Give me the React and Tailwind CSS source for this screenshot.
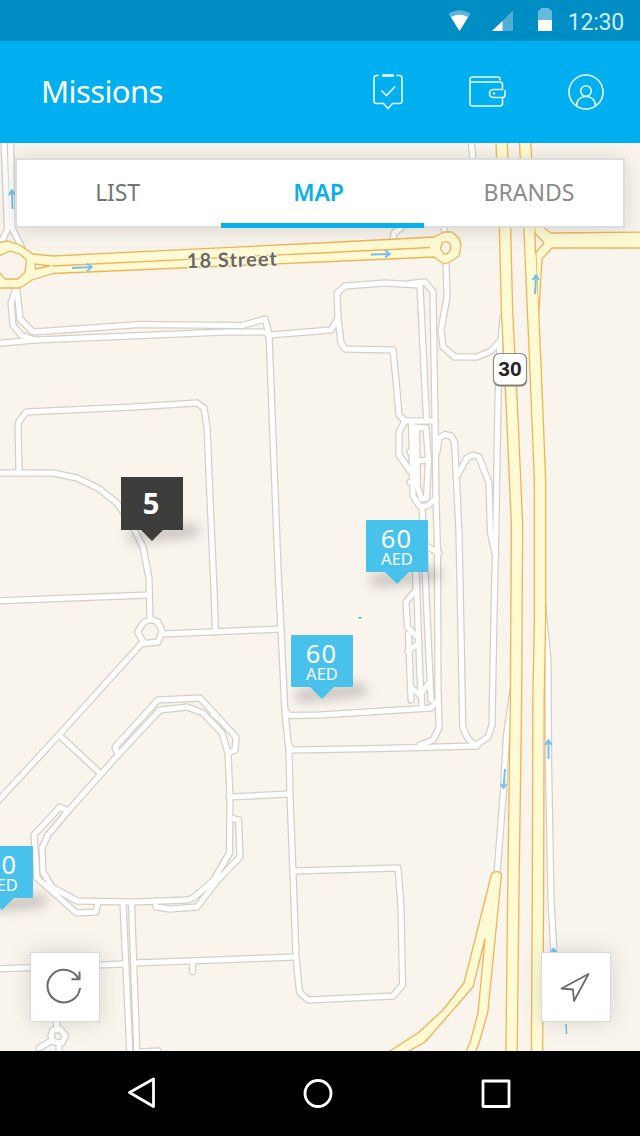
const TABS = [
  { label: 'LIST', className: 'w-[204px] pr-[3px] tracking-[-0.2px] text-[#747474]' },
  {
    label: 'MAP',
    className:
      'relative w-[203px] pr-[8px] font-semibold tracking-[-0.1px] text-[#09aeea] after:absolute after:inset-x-0 after:-bottom-[2px] after:h-[5px] after:bg-[#09aeea]',
  },
  { label: 'BRANDS', className: 'flex-1 pl-[11px] tracking-[0px] text-[#8a8a8a]' },
]

const PINS = [
  { id: 'a', left: 'left-[366px]', top: 'top-[377px]' },
  { id: 'b', left: 'left-[291px]', top: 'top-[492px]' },
  { id: 'c', left: 'left-[-29px]', top: 'top-[703px]' },
]

// Local streets, drawn as a grey casing with a white line on top
const STREETS = [
  'M4 140 L7.500 229 L1 243',
  'M10.500 140 L12 228 L22 248',
  'M471 140 L473.500 165',
  'M393 241 L394 233 L402 227',
  'M445 235 L443 220',
  'M16 288 L11 303 L13 325 L21 335 L35 340',
  'M17 290 L20 319 L33 332 L140 324.500 L242 325.500 L265 319 L269 334',
  'M-4 343.500 L35 340 L225 332 L264 332 L270 335 L331 330 L338 318 L337 293 L345 286 L385 283 L419 285',
  'M338 318 L341 343 L345 349 L393 350 L396 380 L399 415 L405 421 L435 421',
  'M410 283.500 L425 282 L433 292 L434.700 400 L436 500 L437.500 550 L438 687 L439 728 L433 740 L420 745',
  'M420 286 L426.500 420',
  'M446 262 L447 297 L441 330 L443 347 L455 357 L477 357 L491 351 L501 340 L503 318',
  'M500 345 L498 400 L496.700 480 L495.500 550 L494 613 L492 725 L488 737 L476 745',
  'M437 452 L439 438 L445 434.500 L451 436 L454.500 442 L456 470 L459 533 L461 633 L462.700 727 L467 737 L475 746',
  'M457 476 L467 458 L473 455 L479 457 L489 483 L490.500 533 L495.500 555',
  'M404 423 L399 432 L399 455 L411 472',
  'M411.500 423 L413 496 L420 506.500 L427 506 L436.500 498',
  'M412 427 L426 428 L428.500 460 L426.500 498 L421.500 499 L417.500 487 L416.500 427',
  'M418 461 L428 460',
  'M410 452 L416 452',
  'M410 482 L416 482',
  'M422 508 L425 560',
  'M428 547 L439 553',
  'M415 560 L416 590 L406 602 L407.500 627 L418 638',
  'M408.500 634 L411 700',
  'M408 651 L419 643',
  'M416 570 L420 677 L422 707',
  'M424.500 560 L431 700',
  'M412 688 L420 695 L429 683',
  'M286 712 L290 715.500 L320 715 L431 708 L437 701',
  'M288 743 L292 750 L380 748.500 L477 746',
  'M269 334 L278.500 580 L281 630 L285 713 L289 750 L290 795 L293 873 L296 957 L299.500 992 L308 1000 L393 996 L402.500 985 L401 907 L398 868 L293 871',
  'M-4 473 L53 473 L77 478 L98 488 L117 503 L133 527 L143 547 L149 578 L150 620',
  'M19 473 L18 423 L26 412 L133 407 L197 403 L204 408 L207 427 L214 590 L215.500 632',
  'M-4 601 L148 595',
  'M163 634 L281 629',
  'M142 643 L59 735 L-4 803',
  'M144 622 L151 619.500 L158 622 L162 631 L158 642 L144 643.500 L137.500 632 Z',
  'M59 735 L101 774',
  'M118 755 L160 710 L187 707 L203 713 L222 733 L228 753 L230 797 L229.500 853 L213 881 L193 898 L187 900 L133 902 L77 901 L52 887 L43 872 L42 848 L48 835 L68 811 Z',
  'M118 755 L115 747 L158 700 L200 698 L236 737 L235 750 L229 753',
  'M213 714 L218 718',
  'M230 818 L238.500 820 L240 857 L217 881 L197 907 L170 909 L156 907 L155 901',
  'M98 903 L96 912 L76.500 913 L37 878 L34 835 L60 807 L68 811',
  'M229 797 L289 794',
  'M123 903 L130 1056',
  'M131.500 903 L137 1056',
  'M-4 969 L125 964',
  'M134 963 L295 957',
  'M192.500 962 L192.500 971.500',
  'M140 1052 L158 1051',
  'M56 1015 L57 1030',
  'M51 1041 L39 1048',
  'M59 1043 L59 1056',
  'M53 1030 L60 1029 L65.500 1036 L62 1043 L54 1042 L51 1036 Z',
  'M541 590 L548 660 L548.500 760 L551 900 L554 955',
  'M513 690 L506.500 735 L503.500 790 L496.500 880',
]

const HIGHWAYS = [
  'M501.500 140 L505 228 L507 310 L512 410 L517 525 L516 700 L513.500 880 L511.500 1056',
  'M525 140 L529.500 228 L533 310 L537 405 L540 480 L540 620 L538.500 700 L538 890 L537 1056',
]

const ARROWS = [
  'M12.500 209 L12 190 M9 195 L12 190 L15 195',
  'M72 268 L92 267 M87 263.500 L92 267 L87 271',
  'M371 254.500 L390 254 M385 250.500 L390 254 L385 257.500',
  'M535 294 L536 275 M532.500 280 L536 275 L539 280',
  'M505 769 L503.500 788 M501 784 L503.500 788 L506.500 784',
  'M548.500 759 L548.500 740 M545.500 745 L548.500 740 L551.500 745',
]

function StatusBar() {
  return (
    <div className="flex h-[41px] shrink-0 items-center justify-end bg-[#008dc4] pr-4">
      <svg className="mr-[13px] h-[30px] w-[110px]" viewBox="445 5 110 30">
        <path d="M447.500 13 Q458.500 5.500 469.500 13 L458.500 30 Z" fill="#5db5db" />
        <path d="M450 16 Q458.500 11.500 467 16 L458.500 30 Z" fill="#fff" />
        <path d="M512 9.500 V30 H491 Z" fill="#50aed6" />
        <path d="M501.500 20 V30 H491 Z" fill="#fff" />
        <path d="M537 10 Q537 9 539 9 L540 7 H548 L549 9 Q551 9 551 10 V20 H537 Z" fill="#66bbdf" />
        <path d="M537 19 H551 V30 H537 Z" fill="#fff" />
      </svg>
      <span className="mt-[3px] -ml-[1px] font-['Roboto',sans-serif] text-[23px] leading-none tracking-[-0.2px] text-[#c9edfb]">12:30</span>
    </div>
  )
}

function Header() {
  return (
    <header className="flex h-[102px] shrink-0 items-center justify-between bg-[#00aff0] pl-[41px] pr-[35px]">
      <h1 className="pb-[2px] text-[31px] leading-none tracking-[-0.6px] text-white">Missions</h1>
      <svg className="h-[40px] w-[234px]" viewBox="371 72 234 40" fill="none" stroke="#e8f9ff" strokeWidth="1.6">
        {/* Mission check */}
        <path d="M379 75.500 H376.500 Q374 75.500 374 78 V101 Q374 103.500 376.500 103.500 H383.500 L388 108.500 L392.500 103.500 H399.500 Q402 103.500 402 101 V78 Q402 75.500 399.500 75.500 H396.500" />
        <path d="M382 75.500 H394" strokeWidth="2.6" />
        <path d="M381.500 90.500 L386.500 95.500 L395 86.500" />
        {/* Wallet */}
        <path d="M500 80.500 V79 Q500 77 498 77 H472.500 Q470 77 470 79.500 V103.500 Q470 106 472.500 106 H500 Q502.500 106 502.500 103.500 V97.500" />
        <path d="M470 82 H500 Q502.500 82 502.500 84.500 V89.500 H494 Q489.500 89.500 489.500 93.500 Q489.500 97.500 494 97.500 H502.500 Q505 97.500 505 95 V90" />
        <circle cx="494" cy="93.500" r="1.200" fill="#e8f9ff" stroke="none" />
        {/* Profile */}
        <circle cx="586" cy="92" r="17" />
        <circle cx="586" cy="91" r="5.300" />
        <path d="M576.500 106 C576.500 100 580.500 96.500 586 96.500 C591.500 96.500 595.500 100 595.500 106" />
      </svg>
    </header>
  )
}

function StreetMap() {
  return (
    <svg className="absolute inset-0 h-full w-full" viewBox="0 143 640 908" fill="none" strokeLinejoin="round">
      <rect x="0" y="143" width="640" height="908" fill="#f9f4ec" />
      <g stroke="#d5cfc8" strokeWidth="7.500" strokeLinecap="round">
        {STREETS.map((d) => <path key={d} d={d} />)}
      </g>
      <g stroke="#fff" strokeWidth="5" strokeLinecap="round">
        {STREETS.map((d) => <path key={d} d={d} />)}
      </g>
      <path d="M554 950 L559 985 L566 1022" stroke="#d5cfc8" />

      {/* Main roads */}
      <g stroke="#f0b458" strokeWidth="1.300" fill="#fefbd4">
        <path d="M-5 243 L8 241 L20 245 L33 254 L53 256 L320 243 L434 237 L444 232 L452 232 L459 238 L461 245 L459 256 L450 262 L444 264 L434 257 L320 262 L53 273.500 L32 280 L20 288 L-5 288 Z" />
        <path d="M52 266 L320 253 L430 247.500" fill="none" />
        <path d="M-1 256 L10 251 L20 254 L26.500 260 L25 272 L18 279 L5 279 L-1 272 Z" fill="#f9f4ec" />
        <path d="M35 264 L50 266 L35.500 269 Z" fill="#f9f4ec" />
        <path d="M442 243 L446 241.500 L450 243.500 L451 249 L448 253 L444 254 L440.500 249 Z" fill="#f9f4ec" />
        <path d="M491.500 874 Q497 869 501.500 874 L496 930 L487.700 1013 L479 1043 L474 1056 H464 L470 1043 L478 1013 L485 939 L473 987 L453 1010 L425 1042 L400 1056 H382 L418 1033 L443 1010 L464 983 L481.700 913 Z" />
      </g>
      <g stroke="#f0b458" strokeWidth="12.600">
        {HIGHWAYS.map((d) => <path key={d} d={d} />)}
      </g>
      <path d="M535 218 L543 227 L551 233 L645 232 V248 H552 L542 259 L539 310" fill="#fefbd4" stroke="#f0b458" strokeWidth="1.300" />
      <g stroke="#fefbd4" strokeWidth="10">
        {HIGHWAYS.map((d) => <path key={d} d={d} />)}
      </g>
      <path d="M535 233 L544 243 L535.500 253 Z" fill="#f9f4ec" stroke="#f0b458" strokeWidth="1.300" />

      <g stroke="#74c0f1" strokeWidth="2">
        {ARROWS.map((d) => <path key={d} d={d} />)}
      </g>
      <path d="M550 952 L553.500 947 L557 952 Z" fill="#74c0f1" />
      <path d="M566 1024 L566.500 1034" stroke="#5fb2d8" strokeWidth="1.300" />
      <path d="M358 617 H362 L360 619 Z" fill="#33b1dc" />

      <text
        x="187"
        y="268"
        transform="rotate(-1.500 187 267)"
        textLength="90"
        className="font-['Lato',sans-serif] text-[20px] font-bold"
        fill="#6b6762"
        stroke="#fefbe4"
        strokeWidth="2"
        paintOrder="stroke"
      >
        18 Street
      </text>

      {/* Route shield */}
      <rect x="493.500" y="354.500" width="33.500" height="32" rx="6" fill="#77736c" />
      <rect x="493.500" y="353.500" width="33" height="31.500" rx="6" fill="#fff" stroke="#8f8a84" strokeWidth="1.200" />
      <text x="510" y="376" textAnchor="middle" className="font-['Liberation_Sans',sans-serif] text-[21px] font-bold" fill="#252525">30</text>
    </svg>
  )
}

function PricePin({ left, top }) {
  return (
    <div className={`absolute ${left} ${top} w-[62px]`}>
      <div className="absolute left-[4px] top-[51px] h-[13px] w-[72px] -rotate-6 rounded-full bg-black/20 blur-[6px]" />
      <div className="relative flex h-[52px] flex-col items-center rounded-[1px] bg-[#48c2ea] pt-[5px] text-white">
        <span className="-ml-[1px] text-[25.5px] leading-[26px] tracking-[1.2px]">60</span>
        <span className="text-[16.500px] leading-[16px]">AED</span>
      </div>
      <div className="relative mx-auto h-[12px] w-[24px] bg-[#48c2ea] [clip-path:polygon(0_0,100%_0,50%_100%)]" />
    </div>
  )
}

function ClusterPin() {
  return (
    <div className="absolute left-[121px] top-[334px] w-[62px]">
      <div className="absolute left-[6px] top-[50px] h-[13px] w-[72px] -rotate-6 rounded-full bg-black/20 blur-[6px]" />
      <div className="relative flex h-[53px] items-center justify-center bg-[#3d3d3b] pr-[2px] pb-[2px] font-['Open_Sans','Noto_Sans',sans-serif] text-[29px] font-bold leading-none text-white">5</div>
      <div className="relative mx-auto h-[11px] w-[22px] bg-[#3d3d3b] [clip-path:polygon(0_0,100%_0,50%_100%)]" />
    </div>
  )
}

function Tabs() {
  return (
    <nav className="relative mx-[15px] mt-[15px] flex h-[70px] border-2 border-[#dddddd] bg-white shadow-[0_2px_20px_rgba(90,100,90,0.2)]">
      {TABS.map(({ label, className }) => (
        <button key={label} className={`pb-[2px] text-[23px] ${className}`}>
          {label}
        </button>
      ))}
    </nav>
  )
}

function MapButton({ children }) {
  return (
    <button className="flex size-[70px] items-center justify-center border border-[#d8d9da] bg-white shadow-[0_0_18px_rgba(90,110,110,0.22)]">
      {children}
    </button>
  )
}

function NavBar() {
  return (
    <div className="h-[85px] shrink-0 bg-black">
      <svg className="h-full w-full" viewBox="0 1051 640 85" fill="none" stroke="#fff" strokeWidth="2.800" strokeLinejoin="round">
        <path d="M153.500 1079 V1106.500 L129.500 1092.500 Z" />
        <circle cx="318" cy="1093.500" r="13" />
        <rect x="483" y="1081" width="26" height="25.500" />
      </svg>
    </div>
  )
}

export default function App() {
  return (
    <div className="flex h-[1136px] w-[640px] flex-col overflow-hidden font-['Noto_Sans',sans-serif]">
      <StatusBar />
      <Header />
      <main className="relative flex flex-1 flex-col justify-between overflow-hidden">
        <StreetMap />
        <ClusterPin />
        {PINS.map(({ id, left, top }) => <PricePin key={id} left={left} top={top} />)}
        <Tabs />
        <div className="relative flex justify-between pb-[29px] pl-[30px] pr-[29px]">
          <MapButton>
            <svg className="size-[40px]" viewBox="0 0 40 40" fill="none" stroke="#6b6b6b" strokeWidth="2">
              <path d="M35 21 A16.300 16.300 0 1 1 33.500 12 M34.500 4.500 V12.200 H26.500" />
            </svg>
          </MapButton>
          <MapButton>
            <svg className="size-[40px]" viewBox="0 0 40 40" fill="none" stroke="#6b6b6b" strokeWidth="1.800" strokeLinejoin="round">
              <path d="M32.500 7 L5.500 21.500 L17 22.500 L18 34 Z" />
            </svg>
          </MapButton>
        </div>
      </main>
      <NavBar />
    </div>
  )
}
